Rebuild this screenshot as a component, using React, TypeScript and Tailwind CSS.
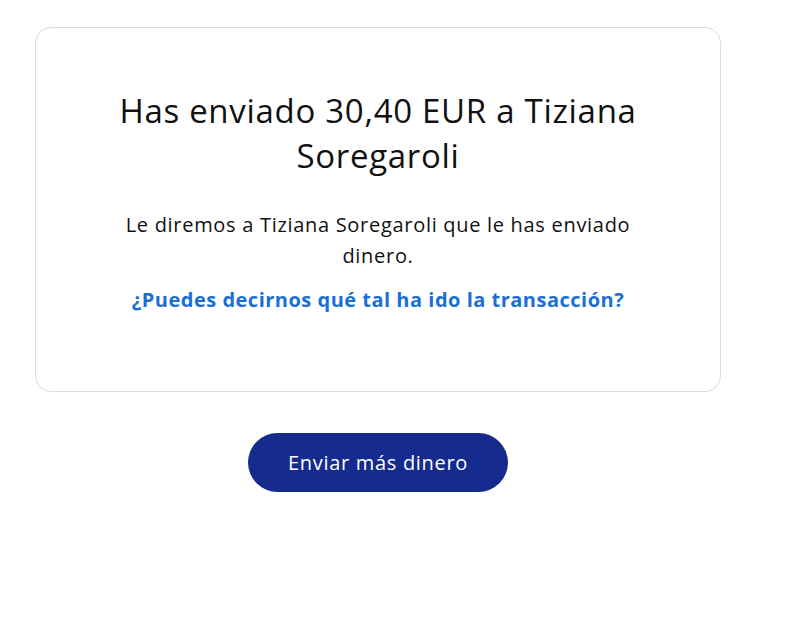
export default function App() {
  return (
    <div className="min-h-[618px] w-[800px] bg-white pt-[27px] pl-[35px] font-['Open_Sans',sans-serif]">
      <div className="w-[686px] flex flex-col items-center">
        {/* Card */}
        <div className="w-full h-[365px] rounded-[16px] border border-[#dcdcdc] flex flex-col items-center pt-[60px] px-[60px]">
          <h1 className="max-w-[560px] text-center text-[33px] leading-[45px] tracking-[0.7px] text-[#111]">
            Has enviado 30,40 EUR a Tiziana Soregaroli
          </h1>
          <p className="mt-[31px] max-w-[540px] text-center text-[20px] leading-[31px] tracking-[0.7px] text-[#111]">
            Le diremos a Tiziana Soregaroli que le has enviado dinero.
          </p>
          <a href="#" className="mt-[13px] text-center text-[20px] leading-[31px] tracking-[0.5px] font-bold text-[#1a6fd6]">
            ¿Puedes decirnos qué tal ha ido la transacción?
          </a>
        </div>

        <button className="mt-[41px] w-[260px] h-[59px] rounded-full bg-[#152b8e] text-white text-[20px] tracking-[0.7px]">
          Enviar más dinero
        </button>
      </div>
    </div>
  );
}
